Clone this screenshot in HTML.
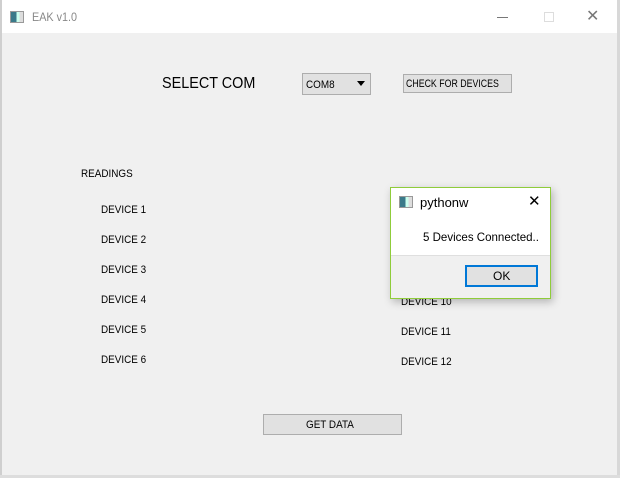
<!DOCTYPE html>
<html><head><meta charset="utf-8"><style>
*{margin:0;padding:0;box-sizing:border-box}
body{width:620px;height:478px;overflow:hidden;background:#f0f0f0;font-family:"Liberation Sans",sans-serif;position:relative}
.a{position:absolute;white-space:nowrap}
.t{font-size:11px;color:#000;line-height:12px;transform:scaleX(0.9);transform-origin:0 0}
</style></head><body>
<div class="a" style="left:0;top:0;width:620px;height:3px;background:#fff"></div>
<div class="a" style="left:0;top:0;width:2px;height:478px;background:#cfcfcf"></div>
<div class="a" style="left:617px;top:0;width:3px;height:478px;background:#d8d8d8"></div>
<div class="a" style="left:2px;top:3px;width:615px;height:30px;background:#fff"></div>
<div class="a" style="left:10px;top:11px;width:14px;height:12px;border:1px solid #999;background:linear-gradient(90deg,#3a7a8a 0 45%,#cfe 45% 70%,#ddd 70%)"></div>
<div class="a" style="left:32px;top:10px;font-size:12px;color:#888;transform:scaleX(0.9);transform-origin:0 0">EAK v1.0</div>
<div class="a" style="left:497px;top:17px;width:11px;height:1px;background:#777"></div>
<div class="a" style="left:544px;top:12px;width:10px;height:10px;border:1px solid #ddd"></div>
<div class="a" style="left:586px;top:6px;font-size:16px;color:#777">✕</div>
<div class="a" style="left:0;top:475px;width:620px;height:3px;background:#ddd"></div>

<div class="a" style="left:162px;top:75px;font-size:16px;color:#000;transform:scaleX(0.9);transform-origin:0 0">SELECT COM</div>
<div class="a" style="left:302px;top:73px;width:69px;height:22px;border:1px solid #adadad;background:#e1e1e1"></div>
<div class="a t" style="left:306px;top:79px">COM8</div>
<div class="a" style="left:357px;top:81px;width:0;height:0;border-left:4px solid transparent;border-right:4px solid transparent;border-top:5px solid #000"></div>
<div class="a" style="left:403px;top:74px;width:109px;height:19px;border:1px solid #adadad;background:#e1e1e1"></div>
<div class="a t" style="left:406px;top:78px;transform:scaleX(0.8)">CHECK FOR DEVICES</div>

<div class="a t" style="left:81px;top:168px">READINGS</div>
<div class="a t" style="left:101px;top:204px">DEVICE 1</div>
<div class="a t" style="left:101px;top:234px">DEVICE 2</div>
<div class="a t" style="left:101px;top:264px">DEVICE 3</div>
<div class="a t" style="left:101px;top:294px">DEVICE 4</div>
<div class="a t" style="left:101px;top:324px">DEVICE 5</div>
<div class="a t" style="left:101px;top:354px">DEVICE 6</div>
<div class="a t" style="left:401px;top:296px">DEVICE 10</div>
<div class="a t" style="left:401px;top:326px">DEVICE 11</div>
<div class="a t" style="left:401px;top:356px">DEVICE 12</div>

<div class="a" style="left:263px;top:414px;width:139px;height:21px;border:1px solid #adadad;background:#e1e1e1"></div>
<div class="a t" style="left:306px;top:419px">GET DATA</div>

<div class="a" style="left:390px;top:187px;width:161px;height:112px;border:1px solid #8fcc3a;background:#f0f0f0;box-shadow:2px 3px 8px rgba(0,0,0,.25)">
  <div class="a" style="left:0;top:0;width:159px;height:68px;background:#fff;border-bottom:1px solid #dfdfdf"></div>
  <div class="a" style="left:8px;top:8px;width:14px;height:12px;border:1px solid #999;background:linear-gradient(90deg,#3a7a8a 0 45%,#cfe 45% 70%,#ddd 70%)"></div>
  <div class="a" style="left:29px;top:7px;font-size:13px;color:#000">pythonw</div>
  <div class="a" style="left:137px;top:4px;font-size:15px;color:#000">✕</div>
  <div class="a" style="left:32px;top:42px;font-size:12px;color:#000;transform:scaleX(0.96);transform-origin:0 0">5 Devices Connected..</div>
  <div class="a" style="left:74px;top:77px;width:73px;height:22px;border:2px solid #0078d7;background:#e1e1e1"></div>
  <div class="a" style="left:102px;top:81px;font-size:12px;color:#000">OK</div>
</div>
</body></html>
